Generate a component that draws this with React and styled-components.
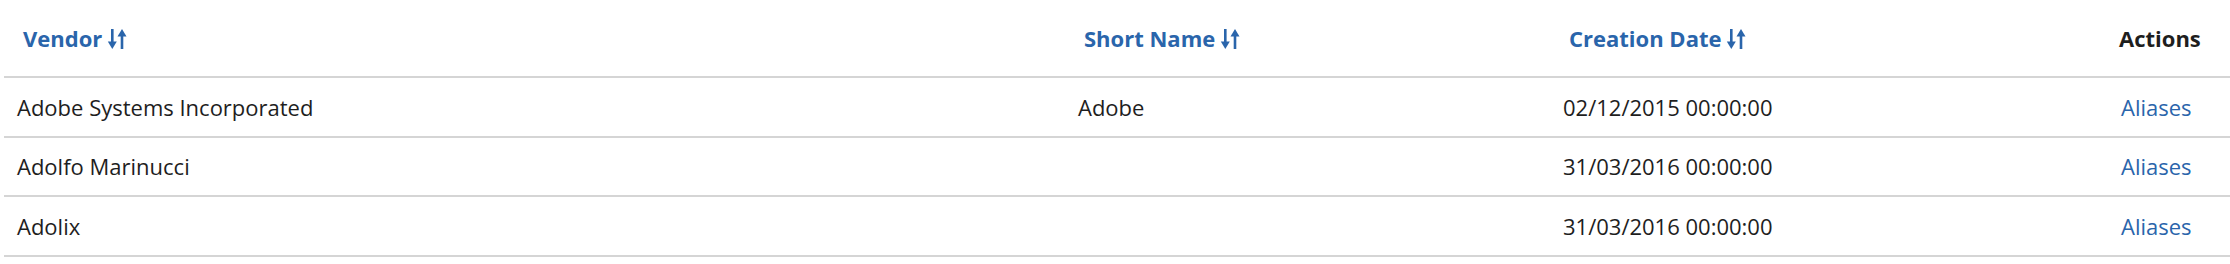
import styled, { createGlobalStyle } from "styled-components";

const GlobalStyle = createGlobalStyle`
  body {
    margin: 0;
    background: #ffffff;
    font-family: "Open Sans", "Liberation Sans", sans-serif;
  }
`;

const rows = [
  { vendor: "Adobe Systems Incorporated", short: "Adobe", created: "02/12/2015 00:00:00" },
  { vendor: "Adolfo Marinucci", short: "", created: "31/03/2016 00:00:00" },
  { vendor: "Adolix", short: "", created: "31/03/2016 00:00:00" },
];

function SortIcon() {
  return (
    <SortSvg width='20' height='20' viewBox='0 0 20 20'>
      <rect x='4' y='0' width='2.6' height='14' />
      <polygon points='0.8,12.6 9.8,12.6 5.3,20' />
      <rect x='13.7' y='6' width='2.6' height='14' />
      <polygon points='10.5,7.4 19.5,7.4 15,0' />
    </SortSvg>
  );
}

function App() {
  return (
    <Page>
      <GlobalStyle />
      <Table>
        <colgroup>
          <col style={{ width: "1061px" }} />
          <col style={{ width: "485px" }} />
          <col style={{ width: "556px" }} />
          <col />
        </colgroup>
        <thead>
          <tr>
            <Th>
              <SortLink>
                Vendor <SortIcon />
              </SortLink>
            </Th>
            <Th>
              <SortLink>
                Short Name <SortIcon />
              </SortLink>
            </Th>
            <Th>
              <SortLink>
                Creation Date <SortIcon />
              </SortLink>
            </Th>
            <Th>Actions</Th>
          </tr>
        </thead>
        <tbody>
          {rows.map((el) => (
            <tr key={el.vendor}>
              <Td>{el.vendor}</Td>
              <Td>{el.short}</Td>
              <Td>{el.created}</Td>
              <Td $inset={15}>
                <ActionLink>Aliases</ActionLink>
              </Td>
            </tr>
          ))}
        </tbody>
      </Table>
    </Page>
  );
}

const Page = styled.div`
  padding-left: 4px;
`;

const Table = styled.table`
  width: 2226px;
  border-collapse: collapse;
  table-layout: fixed;
  font-size: 22px;
  color: #1e1e1e;
`;

const Th = styled.th`
  height: 76px;
  padding: 0 0 0 13px;
  text-align: left;
  vertical-align: middle;
  font-weight: 700;
  color: #1e1e1e;
  border-bottom: 2px solid #d5d5d5;
  white-space: nowrap;
`;

const SortLink = styled.span`
  margin-left: 6px;
  color: #2a65ab;
  cursor: pointer;
`;

const SortSvg = styled.svg`
  fill: #2a65ab;
  vertical-align: -2px;
  margin-left: -1px;
`;

const Td = styled.td`
  height: 57.5px;
  padding: 0 0 0 ${(p) => p.$inset || 13}px;
  vertical-align: middle;
  border-bottom: 2px solid #d5d5d5;
  white-space: nowrap;
`;

const ActionLink = styled.a`
  color: #2a65ab;
  cursor: pointer;
`;

export default App;
